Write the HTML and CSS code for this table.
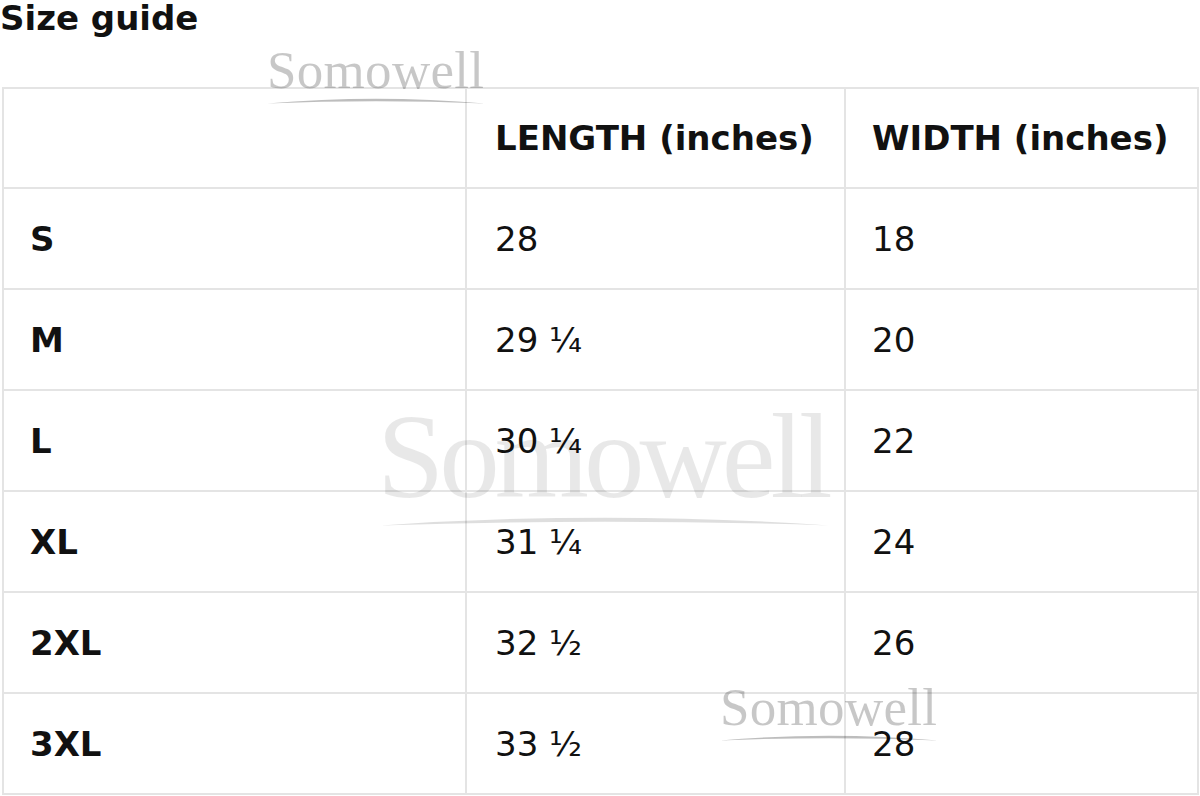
FILE: index.html
```html
<!DOCTYPE html>
<html lang="en">
<head>
<meta charset="utf-8">
<title>Size guide</title>
<link rel="stylesheet" href="styles.css">
</head>
<body>
<h1 class="title">Size guide</h1>
<table class="sizes">
  <colgroup>
    <col class="col-size">
    <col class="col-length">
    <col class="col-width">
  </colgroup>
  <thead>
    <tr class="head-row"><th></th><th>LENGTH (inches)</th><th>WIDTH (inches)</th></tr>
  </thead>
  <tbody>
    <tr><th>S</th><td>28</td><td>18</td></tr>
    <tr><th>M</th><td>29 ¼</td><td>20</td></tr>
    <tr><th>L</th><td>30 ¼</td><td>22</td></tr>
    <tr><th>XL</th><td>31 ¼</td><td>24</td></tr>
    <tr><th>2XL</th><td>32 ½</td><td>26</td></tr>
    <tr><th>3XL</th><td>33 ½</td><td>28</td></tr>
  </tbody>
</table>

<div class="wm wm-small wm-top">
  <span class="wm-text">Somowell</span>
  <svg class="wm-swoosh" viewBox="0 0 220 8" preserveAspectRatio="none"><path d="M0 6.5 Q110 -3 220 6.5 Q110 2 0 6.5 Z"/></svg>
</div>
<div class="wm wm-big">
  <span class="wm-text">Somowell</span>
  <svg class="wm-swoosh" viewBox="0 0 220 8" preserveAspectRatio="none"><path d="M0 7 Q110 -2.5 220 7 Q110 2.5 0 7 Z"/></svg>
</div>
<div class="wm wm-small wm-bottom">
  <span class="wm-text">Somowell</span>
  <svg class="wm-swoosh" viewBox="0 0 220 8" preserveAspectRatio="none"><path d="M0 6.5 Q110 -3 220 6.5 Q110 2 0 6.5 Z"/></svg>
</div>
</body>
</html>
```

FILE: styles.css
```css
html, body {
  margin: 0;
  padding: 0;
  background: #ffffff;
}
body {
  position: relative;
  width: 1200px;
  height: 796px;
  overflow: hidden;
  font-family: "DejaVu Sans", "Liberation Sans", sans-serif;
  color: #111111;
}
.title {
  margin: 1px 0 0 0;
  font-size: 34px;
  line-height: 34px;
  font-weight: bold;
  height: 34px;
}
.sizes {
  margin: 52px 0 0 2px;
  border-collapse: collapse;
  table-layout: fixed;
  width: 1195px;
}
.col-size { width: 463px; }
.col-length { width: 379px; }
.col-width { width: 353px; }
.sizes th,
.sizes td {
  border: 2px solid #e4e4e4;
  padding: 0 0 0 26px;
  font-size: 34px;
  line-height: 40px;
  text-align: left;
  vertical-align: middle;
  height: 99px;
}
.sizes th:nth-child(2),
.sizes td:nth-child(2) { padding-left: 28px; }
.sizes th:nth-child(3),
.sizes td:nth-child(3) { padding-left: 26px; }
.sizes th { font-weight: bold; }
.sizes td { font-weight: normal; }
.head-row th { height: 98px; }

.wm {
  position: absolute;
  display: flex;
  flex-direction: column;
  pointer-events: none;
  font-family: "Liberation Serif", "Times New Roman", serif;
}
.wm-text {
  display: block;
  line-height: 1;
  white-space: nowrap;
}
.wm-swoosh {
  display: block;
}
.wm-small .wm-text {
  font-size: 53px;
  letter-spacing: 0.3px;
  color: rgba(0, 0, 0, 0.22);
}
.wm-small .wm-swoosh {
  width: 218px;
  height: 8px;
  margin-top: 0;
  fill: rgba(0, 0, 0, 0.26);
}
.wm-top { left: 267px; top: 44px; }
.wm-bottom { left: 720px; top: 681px; }
.wm-big .wm-text {
  font-size: 121px;
  letter-spacing: -5px;
  color: rgba(0, 0, 0, 0.09);
}
.wm-big .wm-swoosh {
  width: 448px;
  height: 13px;
  margin-top: -3px;
  margin-left: 4px;
  fill: rgba(0, 0, 0, 0.13);
}
.wm-big { left: 377px; top: 396px; }
```
